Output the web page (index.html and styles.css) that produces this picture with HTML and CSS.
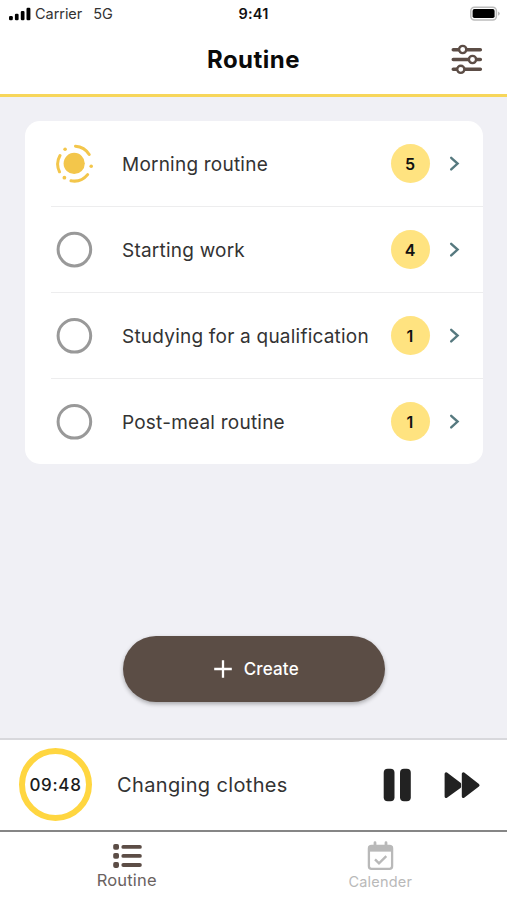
FILE: index.html
```html
<!DOCTYPE html>
<html lang="en">
<head>
<meta charset="utf-8">
<meta name="viewport" content="width=device-width, initial-scale=1">
<title>Routine</title>
<link rel="stylesheet" href="styles.css">
</head>
<body>
<div class="app">
  <div class="status">
    <div class="status-left">
      <svg class="signal" width="22" height="14" viewBox="0 0 22 14"><rect x="0" y="9" width="3.8" height="4.3" rx="1.2"/><rect x="5.9" y="6.7" width="3.7" height="6.6" rx="1.2"/><rect x="11.8" y="3.9" width="3.7" height="9.4" rx="1.2"/><rect x="17.5" y="0.8" width="3.9" height="12.5" rx="1.2"/></svg>
      <span class="carrier">Carrier</span>
      <span class="network">5G</span>
    </div>
    <span class="clock">9:41</span>
    <div class="status-right">
      <svg width="31" height="16" viewBox="0 0 31 16"><rect x="1.8" y="1.3" width="25.6" height="12.6" rx="3.6" fill="#fff" stroke="#bcbcbc" stroke-width="1.5"/><rect x="3.6" y="3.1" width="22" height="9" rx="1.8"/><path d="M29 5.4q1.8.8 1.8 2.2T29 9.8z" fill="#bcbcbc"/></svg>
    </div>
  </div>
  <header class="header">
    <h1 class="title">Routine</h1>
    <button class="settings" aria-label="Settings">
      <svg width="33" height="31" viewBox="0 0 33 31" fill="none" stroke="#5c4d46" stroke-linecap="round"><path d="M3.3 5.7h27M3.3 15.5h27M3.3 25.3h27" stroke-width="3.6"/><g fill="#fff" stroke-width="2.4"><circle cx="12.7" cy="5.5" r="3.6"/><circle cx="22.5" cy="15.5" r="3.6"/><circle cx="10.8" cy="25.3" r="3.6"/></g></svg>
    </button>
  </header>
  <main class="content">
    <ul class="card">
      <li class="row">
        <svg class="state" width="40" height="40" viewBox="0 0 40 40"><circle cx="20.2" cy="19.4" r="10.6" fill="#f3c64b"/><g fill="none" stroke="#f3c64b" stroke-width="3" stroke-linecap="round"><path d="M21.5 2.2A17.2 17.2 0 0 1 35.2 10.5M33.6 30.6A17.5 17.5 0 0 1 17 36.8M5.5 27.8A17.2 17.2 0 0 1 6 11.6"/></g><g fill="#f3c64b"><circle cx="11.1" cy="5.2" r="1.8"/><circle cx="37.2" cy="22.3" r="1.8"/><circle cx="10.4" cy="33.7" r="1.9"/></g></svg>
        <span class="name">Morning routine</span><span class="count">5</span>
        <svg class="chevron" width="11" height="16" viewBox="0 0 11 16"><path d="M2.2 1.8 8.6 7.6l-6.4 5.8"/></svg>
      </li>
      <li class="row">
        <svg class="state" width="40" height="40" viewBox="0 0 40 40"><circle class="ring" cx="20.4" cy="19.6" r="16.3"/></svg>
        <span class="name">Starting work</span><span class="count">4</span>
        <svg class="chevron" width="11" height="16" viewBox="0 0 11 16"><path d="M2.2 1.8 8.6 7.6l-6.4 5.8"/></svg>
      </li>
      <li class="row">
        <svg class="state" width="40" height="40" viewBox="0 0 40 40"><circle class="ring" cx="20.4" cy="19.8" r="16.3"/></svg>
        <span class="name">Studying for a qualification</span><span class="count">1</span>
        <svg class="chevron" width="11" height="16" viewBox="0 0 11 16"><path d="M2.2 1.8 8.6 7.6l-6.4 5.8"/></svg>
      </li>
      <li class="row">
        <svg class="state" width="40" height="40" viewBox="0 0 40 40"><circle class="ring" cx="20.4" cy="19.8" r="16.3"/></svg>
        <span class="name">Post-meal routine</span><span class="count">1</span>
        <svg class="chevron" width="11" height="16" viewBox="0 0 11 16"><path d="M2.2 1.8 8.6 7.6l-6.4 5.8"/></svg>
      </li>
    </ul>
    <button class="create">
      <svg width="18" height="18" viewBox="0 0 18 18"><path d="M9 .2v17.6M.2 9h17.6" stroke="#fff" stroke-width="2.3"/></svg>
      <span>Create</span>
    </button>
  </main>
  <section class="player">
    <div class="timer">09:48</div>
    <span class="task">Changing clothes</span>
    <svg class="pause" width="28" height="34" viewBox="0 0 28 34" fill="#222"><rect x=".7" y=".8" width="10.8" height="32.4" rx="4"/><rect x="17" y=".8" width="10.8" height="32.4" rx="4"/></svg>
    <svg class="forward" width="36" height="28" viewBox="0 0 36 28" fill="#222" stroke="#222" stroke-width="3" stroke-linejoin="round"><path d="M2.1 2.8v22.8L15.6 15.8v-2.8zM19.3 2.8v22.8L34 14.3z"/></svg>
  </section>
  <nav class="tabs">
    <a class="tab active">
      <svg width="29" height="26" viewBox="0 0 29 26" fill="#5c4d46"><rect x="0.2" y="1" width="5.8" height="5.8" rx="1.8"/><rect x="0.2" y="10" width="5.8" height="5.8" rx="1.8"/><rect x="0.2" y="19.1" width="5.8" height="5.8" rx="1.8"/><rect x="8.4" y="2" width="20.4" height="3.8" rx="1.9"/><rect x="8.4" y="11" width="20.4" height="3.8" rx="1.9"/><rect x="8.4" y="20.1" width="20.4" height="3.8" rx="1.9"/></svg>
      <span class="label">Routine</span>
    </a>
    <a class="tab">
      <svg width="27" height="30" viewBox="0 0 27 30" fill="none" stroke="#b9b9b9"><rect x="1.9" y="4.9" width="23.2" height="23" rx="2.6" stroke-width="2.3"/><path d="M2 5.5h23v4.6H2z" fill="#b9b9b9"/><path d="M8 1.7v4M19 1.7v4" stroke-width="2.8" stroke-linecap="round"/><path d="m8 18.3 4 4 7.3-7.2" stroke-width="2.4"/></svg>
      <span class="label">Calender</span>
    </a>
  </nav>
</div>
</body>
</html>
```

FILE: styles.css
```css
* { box-sizing: border-box; }
body { margin: 0; font-family: Inter, "Liberation Sans", sans-serif; color: #333; }
svg { display: block; flex: none; }
button { border: 0; padding: 0; background: none; font: inherit; }
.app { width: 507px; height: 900px; display: flex; flex-direction: column; background: #fff; overflow: hidden; }
.status { height: 27px; flex: none; display: grid; grid-template-columns: 1fr auto 1fr; align-items: center; padding: 0 7px 0 9px; }
.status-left { display: flex; align-items: center; font-size: 14.5px; color: #333; white-space: nowrap; }
.signal { margin-right: 4px; }
.carrier { letter-spacing: -.05px; }
.network { margin-left: 11px; }
.clock { font-size: 14.5px; font-weight: 600; color: #111; letter-spacing: .2px; margin-right: 2px; }
.status-right { display: flex; justify-content: flex-end; }
.header { height: 70px; flex: none; display: grid; grid-template-columns: 1fr auto 1fr; align-items: center; padding: 1px 24px 3px; border-bottom: 3px solid #f7d65a; }
.title { grid-column: 2; margin: 0; padding-top: 1px; font-size: 24px; line-height: 30px; font-weight: 700; color: #0a0a0a; letter-spacing: .5px; }
.settings { justify-self: end; }
.content { height: 641px; flex: none; background: #f0f0f5; padding: 24px 24.5px 0 25px; display: flex; flex-direction: column; align-items: center; }
.card { list-style: none; margin: 0; padding: 0 0 0 26px; width: 100%; height: 343px; background: #fff; border-radius: 15px; }
.row { height: 86px; display: flex; align-items: center; border-bottom: 1px solid #ededee; padding: 0 23px 0 3px; }
.row:last-child { height: 85px; border-bottom: 0; }
.ring { fill: none; stroke: #999; stroke-width: 3; }
.name { flex: 1; margin-left: 28px; padding-top: 1px; font-size: 19px; letter-spacing: .22px; white-space: nowrap; }
.count { width: 39px; height: 39px; border-radius: 50%; background: #ffe380; display: flex; align-items: center; justify-content: center; font-size: 16px; font-weight: 600; color: #111; }
.chevron { margin-left: 19px; fill: none; stroke: #56797f; stroke-width: 2.4; stroke-linecap: round; }
.create { margin-top: 172px; width: 262px; height: 66px; border-radius: 33px; background: #5b4d45; color: #fff; display: flex; align-items: center; justify-content: center; gap: 12px; padding-left: 5px; font-size: 17px; font-weight: 500; letter-spacing: .15px; box-shadow: 0 2px 4px rgba(0,0,0,.3); }
.player { height: 94px; flex: none; display: flex; align-items: center; padding: 0 27px 0 19px; border-top: 2px solid #d8d8dc; border-bottom: 2px solid #868686; }
.timer { width: 73px; height: 73px; margin-top: -1px; border: 6.5px solid #ffd640; border-radius: 50%; display: flex; align-items: center; justify-content: center; font-size: 17px; font-weight: 500; letter-spacing: .7px; color: #1c1c1c; }
.task { flex: 1; margin-left: 25px; font-size: 20px; letter-spacing: .35px; white-space: nowrap; }
.forward { margin-left: 33px; }
.tabs { height: 68px; display: grid; grid-template-columns: 1fr 1fr; }
.tab { display: flex; flex-direction: column; align-items: center; color: #b9b9b9; padding-top: 9px; }
.tab.active { color: #6a625f; padding: 11px 0 0 2px; }
.label { font-size: 14.5px; line-height: 20px; margin-top: 1px; letter-spacing: .2px; }
.active .label { font-size: 16.5px; margin: 1px 2px 0 0; }
```
